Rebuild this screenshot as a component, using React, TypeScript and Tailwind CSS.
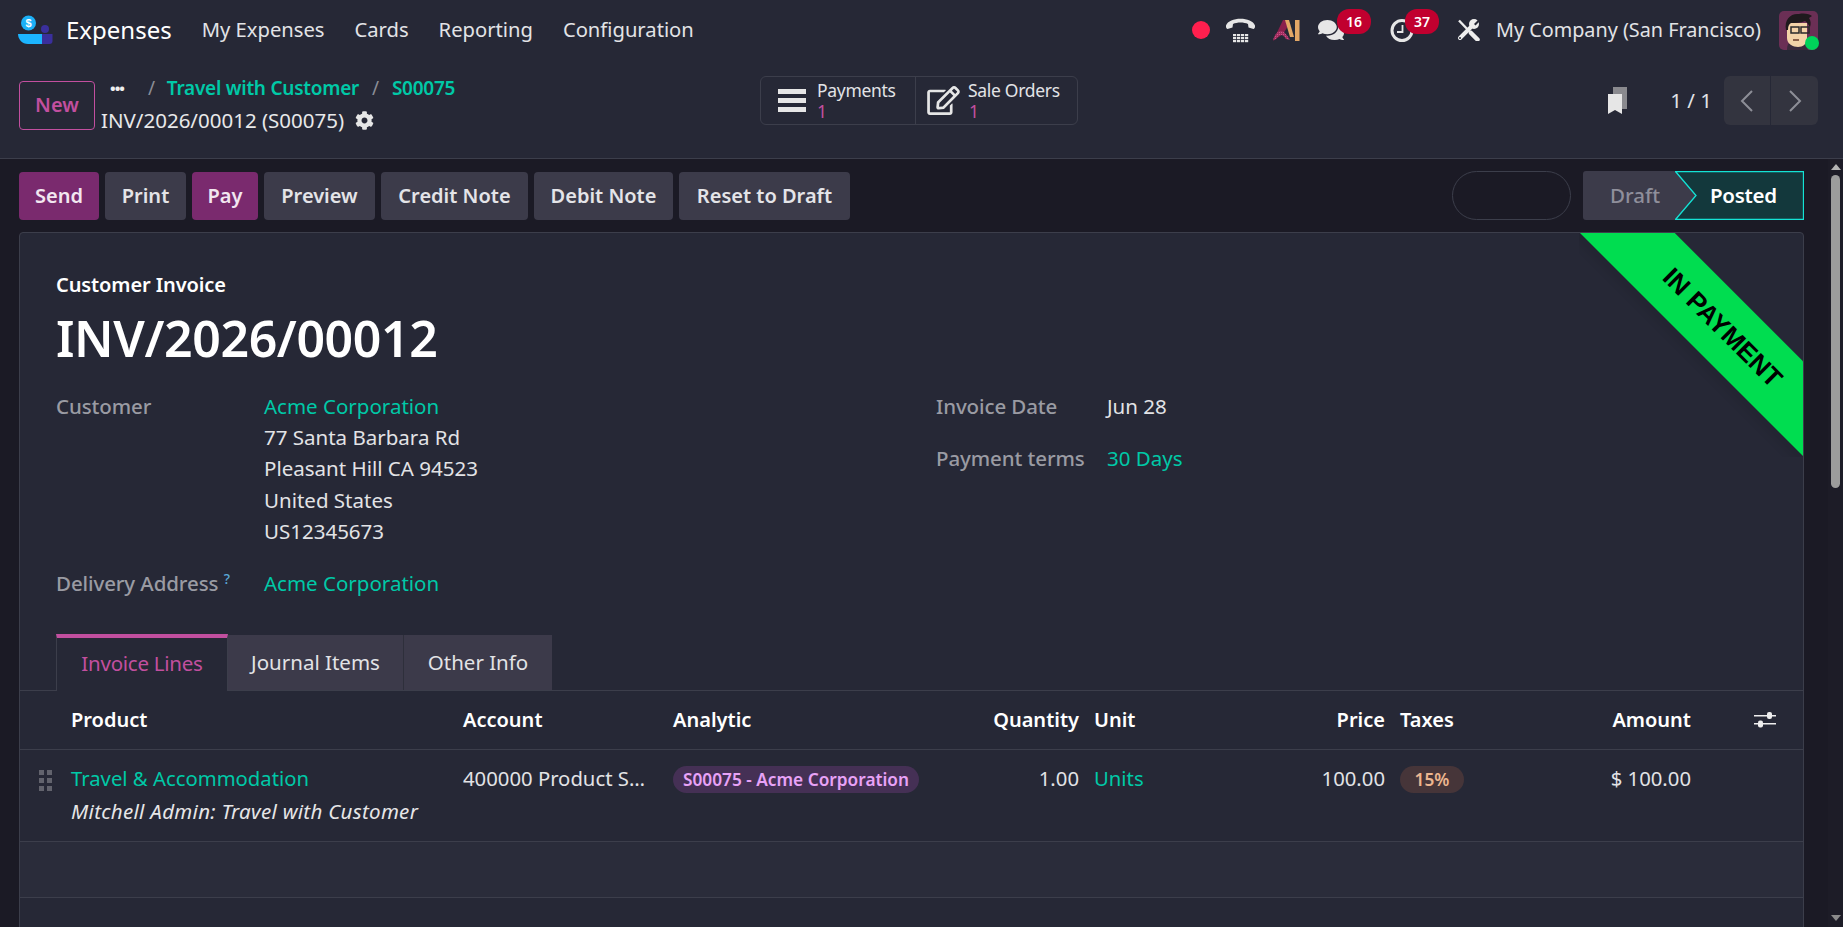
import { FaComments, FaCog, FaRegEdit } from "react-icons/fa";

const F = "font-['Noto_Sans',sans-serif]";

function Logo() {
  return (
    <svg width="36" height="32" viewBox="0 0 36 32" className="shrink-0">
      <circle cx="10.5" cy="9" r="7.5" fill="#1cb0f6" />
      <text x="10.5" y="13" fontSize="11" fontWeight="700" fill="#fff" textAnchor="middle" fontFamily="Liberation Sans">$</text>
      <circle cx="27" cy="15" r="4" fill="#3a2f9c" />
      <path d="M20 20h14.5v7a3 3 0 0 1-3 3H20z" fill="#3a2f9c" />
      <path d="M0 20h24v10H10C4 30 0 25 0 20z" fill="#1cb5ff" />
    </svg>
  );
}

function Phone() {
  return (
    <svg width="29" height="25" viewBox="0 0 29 25">
      <path d="M0 7.500C3-1.500 26-1.500 29 7.500c.3 2-.5 3-1.500 3.500l-5-1.500-.5-3.500c-4-2-11-2-15 0l-.5 3.500-5 1.500C.5 10.500-.3 9.500 0 7.500z" fill="#e6e6e6" />
      {[16, 19, 22].map((y) => (
        <g key={y} fill="#e6e6e6">
          <rect x="7" y={y} width="3.200" height="2.200" />
          <rect x="11" y={y} width="3.200" height="2.200" />
          <rect x="15" y={y} width="3.200" height="2.200" />
          <rect x="19" y={y} width="3.200" height="2.200" />
        </g>
      ))}
    </svg>
  );
}

function AI() {
  return (
    <svg width="27" height="21" viewBox="0 0 27 21">
      <defs>
        <pattern id="dots" width="2" height="2" patternUnits="userSpaceOnUse">
          <rect width="2" height="2" fill="#a0305f" />
          <rect width="1" height="1" fill="#d0508a" />
        </pattern>
      </defs>
      <path d="M10 0h3l2 6-5 8-10 7z" fill="#8a1f4c" />
      <path d="M0 20c2-6 5-9 8-9s6 4 9 9l-4-1c-2-3-3-4-5-4s-3 1-5 4z" fill="url(#dots)" />
      <path d="M12 0h4l5 17h-4z" fill="#e3a766" />
      <rect x="22" y="0" width="4.500" height="21" fill="#e3a766" />
    </svg>
  );
}

function Clock() {
  return (
    <svg width="25" height="23" viewBox="0 0 25 23">
      <circle cx="12" cy="11.500" r="10" fill="none" stroke="#e6e6e6" strokeWidth="3" />
      <path d="M12.500 6v7H7" fill="none" stroke="#e6e6e6" strokeWidth="1.800" />
    </svg>
  );
}

function Tools() {
  return (
    <svg width="23" height="22" viewBox="0 0 23 22">
      <path d="M2 1.500L14 14" stroke="#eee" strokeWidth="2.400" />
      <path d="M14 14l6.500 6.500" stroke="#eee" strokeWidth="4.500" strokeLinecap="round" />
      <path d="M3 19L14 8" stroke="#eee" strokeWidth="4" strokeLinecap="round" />
      <circle cx="17" cy="5" r="5" fill="#eee" />
      <path d="M23-1l-6 6 1.500 1.500 6-6z" fill="#262836" />
      <circle cx="3" cy="19" r="1" fill="#262836" />
    </svg>
  );
}

function Sliders() {
  return (
    <svg width="22" height="18" viewBox="0 0 22 18" fill="#eee">
      <rect x="0" y="4" width="22" height="1.500" />
      <rect x="13" y="1" width="5" height="7" rx="2" />
      <rect x="0" y="12" width="22" height="1.500" />
      <rect x="4" y="9.500" width="5" height="7" rx="2" />
    </svg>
  );
}

function Bookmark() {
  return (
    <svg width="20" height="27" viewBox="0 0 20 27">
      <path d="M5 0h14v22H5z" fill="#8a8a8f" />
      <path d="M0 7h14v20l-7-4-7 4z" fill="#e6e6e6" />
    </svg>
  );
}

function Avatar() {
  return (
    <div className="relative w-[39px] h-[39px]">
      <svg width="39" height="39" viewBox="0 0 39 39" className="rounded-[5px]">
        <rect width="39" height="39" fill="#6b2f55" />
        <path d="M8 39c0-6 2-9 9-9s10 3 12 9z" fill="#3b2a3c" />
        <path d="M8 12h20v15c0 6-4 9-9 9s-11-3-11-9z" fill="#f4d3a8" />
        <path d="M7 19C5 8 12 2 20 3c5-1 11 0 13 2l-3 2c2 3 2 6 1 9-2-3-3-5-5-6-4 2-10 2-14 2-2 1-3 3-3 7z" fill="#1f1a1d" />
        <rect x="12" y="16" width="8" height="6" fill="none" stroke="#2a2a2a" strokeWidth="1.500" />
        <rect x="22" y="16" width="8" height="6" fill="none" stroke="#2a2a2a" strokeWidth="1.500" />
        <path d="M14 29h6" stroke="#6a3a2a" strokeWidth="1.500" />
      </svg>
      <span className="absolute right-[-1px] bottom-0 w-[14px] h-[14px] rounded-full bg-[#00d45a]" />
    </div>
  );
}

function Badge({ n, left }: { n: string; left: string }) {
  return (
    <span className={`absolute top-[9px] ${left} w-[34px] h-[25px] rounded-[12px] bg-[#c1002f] text-white text-[14px] font-semibold flex items-center justify-center`}>
      {n}
    </span>
  );
}

function Btn({ w, children, primary }: { w: string; children: string; primary?: boolean }) {
  return (
    <button className={`${w} h-[48px] rounded-[4px] text-[20px] font-semibold flex items-center justify-center ${primary ? "bg-[#7a2a6e] text-[#f2e6f0]" : "bg-[#3c3b4a] text-[#e4e4e8]"}`}>
      {children}
    </button>
  );
}

function Field({ label, w, children, className }: { label: React.ReactNode; w: string; children: React.ReactNode; className?: string }) {
  return (
    <div className={`flex ${className ?? ""}`}>
      <div className={`${w} shrink-0 text-[#9a9ba3] font-medium tracking-[-0.1px]`}>{label}</div>
      <div className="flex flex-col">{children}</div>
    </div>
  );
}

const COLS = "grid grid-cols-[51px_392px_210px_257px_149px_171px_135px_215px_91px_1fr]";

export default function App() {
  return (
    <div className={`${F} w-[1843px] h-[927px] overflow-hidden flex flex-col bg-[#262836] text-[#e2e3e6]`}>
      {/* navbar */}
      <header className="h-[60px] shrink-0 flex items-center pl-[18px] pr-[25px]">
        <Logo />
        <span className="ml-[12px] text-[24px] text-white">Expenses</span>
        <nav className="flex gap-[30px] ml-[30px] pb-[2px] text-[20.200px] text-[#e2e3e6]">
          <span>My Expenses</span>
          <span>Cards</span>
          <span>Reporting</span>
          <span>Configuration</span>
        </nav>
        <div className="ml-auto flex items-center">
          <span className="w-[18px] h-[18px] rounded-full bg-[#ff1f4e] mr-[16px]" />
          <span className="mr-[18px] flex"><Phone /></span>
          <span className="mr-[18px] flex"><AI /></span>
          <span className="relative flex w-[26px] mr-[46px] items-center h-[60px]">
            <FaComments className="w-[27px] h-[24px] text-[#e6e6e6]" />
            <Badge n="16" left="left-[19px]" />
          </span>
          <span className="relative flex w-[25px] mr-[42px] items-center h-[60px]">
            <Clock />
            <Badge n="37" left="left-[15px]" />
          </span>
          <span className="mr-[16px] flex"><Tools /></span>
          <span className="mr-[18px] text-[19.800px]">My Company (San Francisco)</span>
          <Avatar />
        </div>
      </header>

      {/* control panel */}
      <div className="h-[99px] shrink-0 border-b border-[#3c3e4b] flex pl-[19px] pr-[25px] pt-[16px]">
        <button className="w-[76px] h-[49px] mt-[5px] pb-[2px] border border-[#c24f9f] rounded-[4px] text-[#c24f9f] text-[20px] font-semibold flex items-center justify-center">New</button>
        <div className="ml-[6px] w-[355px] shrink-0 flex flex-col -mt-[3px]">
          <div className="flex items-center h-[30px] text-[19px] font-semibold text-[#00c9a7] tracking-[-0.25px]">
            <span className="ml-[9px] w-[16px] text-[#eee] text-[15px] font-bold leading-none tracking-[-1px]">•••</span>
            <span className="ml-[22px] mr-[12px] text-[#8b8d96] font-normal">/</span>
            <span>Travel with Customer</span>
            <span className="mx-[13px] text-[#8b8d96] font-normal">/</span>
            <span>S00075</span>
          </div>
          <div className="flex items-center h-[30px] mt-[2px] text-[20.500px] text-[#e8e8ea]">
            <span>INV/2026/00012 (S00075)</span>
            <FaCog className="ml-[11px] w-[19px] h-[19px] text-[#e6e6e6]" />
          </div>
        </div>
        <div className="ml-[304px] w-[318px] h-[49px] border border-[#3c3e4b] rounded-[6px] flex text-[17.500px] leading-[20px]">
          <div className="w-[155px] border-r border-[#3c3e4b] flex items-center pl-[17px]">
            <div className="w-[28px] flex flex-col gap-[4px]">
              <span className="h-[5px] bg-[#e6e6e6]" />
              <span className="h-[5px] bg-[#e6e6e6]" />
              <span className="h-[5px] bg-[#e6e6e6]" />
            </div>
            <div className="ml-[11px]">
              <div className="tracking-[-0.3px]">Payments</div>
              <div className="text-[#c24f9f] mt-[1px]">1</div>
            </div>
          </div>
          <div className="flex-1 flex items-center pl-[11px]">
            <FaRegEdit className="w-[33px] h-[29px] text-[#e6e6e6]" />
            <div className="ml-[8px]">
              <div className="tracking-[-0.3px]">Sale Orders</div>
              <div className="text-[#c24f9f] pl-[1px] mt-[1px]">1</div>
            </div>
          </div>
        </div>
        <div className="ml-auto h-[49px] flex items-center">
          <Bookmark />
          <span className="ml-[42px] text-[20.500px]">1 / 1</span>
          <div className="ml-[12px] w-[94px] h-[49px] rounded-[6px] bg-[#33343f] flex">
            <div className="w-[47px] border-r border-[#262836] flex items-center justify-center">
              <svg width="14" height="24" viewBox="0 0 14 24" fill="none" stroke="#8d8e97" strokeWidth="2"><path d="M12 2L2 12l10 10" /></svg>
            </div>
            <div className="flex-1 flex items-center justify-center">
              <svg width="14" height="24" viewBox="0 0 14 24" fill="none" stroke="#8d8e97" strokeWidth="2"><path d="M2 2l10 10L2 22" /></svg>
            </div>
          </div>
        </div>
      </div>

      {/* body */}
      <div className="flex-1 min-h-0 flex bg-[#1b1a25]">
        <main className="flex-1 min-w-0 pl-[19px] pr-[24px] pt-[12px] overflow-hidden">
          <div className="flex items-center gap-[6px] h-[49px]">
            <Btn w="w-[80px]" primary>Send</Btn>
            <Btn w="w-[81px]">Print</Btn>
            <Btn w="w-[66px]" primary>Pay</Btn>
            <Btn w="w-[111px]">Preview</Btn>
            <Btn w="w-[147px]">Credit Note</Btn>
            <Btn w="w-[139px]">Debit Note</Btn>
            <Btn w="w-[171px]">Reset to Draft</Btn>
            <div className="ml-auto w-[119px] h-[49px] rounded-full border border-[#3c3e4b]" />
            <div className="ml-[6px] w-[221px] h-[49px] relative flex text-[20.500px] font-medium">
              <div className="w-[113px] bg-[#3c3b4a] rounded-l-[3px] text-[#8f8f9b] flex items-center pl-[27px]">Draft</div>
              <svg className="absolute left-[92px] top-0" width="129" height="49" viewBox="0 0 129 49">
                <path d="M.5.500H128.500V48.500H.5L21 24.500z" fill="#13383c" stroke="#14e3d5" strokeWidth="1.300" />
              </svg>
              <span className="absolute left-[127px] top-[9px] text-white font-semibold tracking-[-0.3px]">Posted</span>
            </div>
          </div>

          <section className="relative mt-[12px] border border-[#3c3e4b] rounded-[4px] bg-[#262836] text-[20.500px] h-[760px] overflow-hidden">
            <div className="absolute right-[-1px] top-[-1px] w-[225px] h-[225px] overflow-hidden pointer-events-none">
              <div className="absolute left-[-26px] top-[54.250px] w-[322px] h-[66.500px] rotate-45 bg-[#00dd50] flex items-center justify-center text-black text-[26px] font-bold font-['Liberation_Sans',sans-serif] shadow-[0_8px_8px_rgba(0,0,0,0.08)]">
                <span className="relative left-[12px]">IN PAYMENT</span>
              </div>
            </div>
            <div className="pl-[36px] pt-[37px]">
              <div className="text-[20px] font-semibold text-white leading-[30px] tracking-[-0.1px]">Customer Invoice</div>
              <h1 className="text-[50px] leading-[62px] mt-[7px] font-semibold text-white tracking-[-0.4px]">INV/2026/00012</h1>
              <div className="flex mt-[22px] leading-[31.500px]">
                <div className="w-[880px] shrink-0">
                  <Field label="Customer" w="w-[208px]">
                    <span className="text-[#00c9a7]">Acme Corporation</span>
                    <span className="-mt-[1px]">77 Santa Barbara Rd</span>
                    <span>Pleasant Hill CA 94523</span>
                    <span>United States</span>
                    <span>US12345673</span>
                  </Field>
                  <Field className="mt-[20px]" w="w-[208px]" label={<>Delivery Address <sup className="text-[#5aa9d6] text-[14px]">?</sup></>}>
                    <span className="text-[#00c9a7]">Acme Corporation</span>
                  </Field>
                </div>
                <div>
                  <Field label="Invoice Date" w="w-[171px]"><span>Jun 28</span></Field>
                  <Field className="mt-[20px]" label="Payment terms" w="w-[171px]"><span className="text-[#00c9a7]">30 Days</span></Field>
                </div>
              </div>
            </div>

            {/* tabs */}
            <div className="flex mt-[35px] pl-[36px] h-[57px] border-b border-[#3c3e4b]">
              <div className="w-[172px] h-[57px] pb-[3px] border-x border-[#3c3e4b] border-t-[4px] border-t-[#c24f9f] bg-[#262836] text-[#c24f9f] tracking-[-0.25px] flex items-center justify-center">Invoice Lines</div>
              <div className="w-[176px] h-[55px] mt-px bg-[#3c3a4a] flex items-center justify-center border-r border-[#2e2f3b]">Journal Items</div>
              <div className="w-[148px] h-[55px] mt-px bg-[#3c3a4a] flex items-center justify-center">Other Info</div>
            </div>

            {/* table */}
            <div className={`${COLS} h-[59px] items-center border-b border-[#3c3e4b] font-semibold text-white text-[20px]`}>
              <span />
              <span>Product</span>
              <span>Account</span>
              <span>Analytic</span>
              <span className="text-right">Quantity</span>
              <span className="pl-[15px]">Unit</span>
              <span className="text-right">Price</span>
              <span className="pl-[15px]">Taxes</span>
              <span className="text-right">Amount</span>
              <span className="pl-[63px]"><Sliders /></span>
            </div>
            <div className={`${COLS} h-[92px] items-start border-b border-[#3c3e4b] pt-[13px] text-[20.300px]`}>
              <span className="pl-[19px] pt-[7px]">
                <span className="grid grid-cols-2 gap-[3px] w-[13px]">
                  {[0, 1, 2, 3, 4, 5].map((i) => <i key={i} className="w-[5px] h-[5px] bg-[#62636d]" />)}
                </span>
              </span>
              <span className="flex flex-col">
                <span className="text-[#00c9a7]">Travel &amp; Accommodation</span>
                <i className="mt-[3px] text-[#e6e6e8] text-[20.500px] tracking-[0.3px]">Mitchell Admin: Travel with Customer</i>
              </span>
              <span className="truncate w-[188px]">400000 Product Sales</span>
              <span>
                <span className="inline-flex items-center h-[27px] w-[246px] justify-center rounded-full bg-[#453055] text-[#e8a2f7] text-[17.250px] font-semibold">S00075 - Acme Corporation</span>
              </span>
              <span className="text-right">1.00</span>
              <span className="pl-[15px] text-[#00c9a7]">Units</span>
              <span className="text-right">100.00</span>
              <span className="pl-[15px]">
                <span className="inline-flex items-center h-[27px] w-[64px] justify-center rounded-full bg-[#463539] text-[#ecb58f] text-[17.250px] font-semibold">15%</span>
              </span>
              <span className="text-right whitespace-nowrap">$ 100.00</span>
            </div>
            <div className="h-[56px] border-b border-[#3c3e4b] bg-[#2a2c3a]" />
          </section>
        </main>

        {/* scrollbar */}
        <aside className="w-[15px] shrink-0 bg-[#1d1c27] flex flex-col items-center">
          <span className="mt-[5px] w-0 h-0 border-x-[5px] border-x-transparent border-b-[6px] border-b-[#b4b4b4]" />
          <span className="mt-[5px] w-[9px] h-[313px] rounded-full bg-[#9c9c9c]" />
          <span className="mt-auto mb-[6px] w-0 h-0 border-x-[5px] border-x-transparent border-t-[6px] border-t-[#8a8a8a]" />
        </aside>
      </div>
    </div>
  );
}
